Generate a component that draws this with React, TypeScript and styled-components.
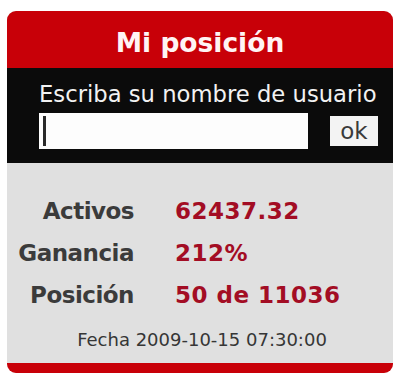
import React from "react";
import styled, { createGlobalStyle } from "styled-components";

const Global = createGlobalStyle`
  html, body { margin: 0; padding: 0; background: #ffffff; }
  body { font-family: "DejaVu Sans", Verdana, sans-serif; }
`;

const Panel = styled.div`
  margin: 11px 0 0 7px;
  width: 386px;
  border-radius: 9px;
  overflow: hidden;
  background: #e0e0e0;
`;

const Header = styled.div`
  height: 57px;
  background: #c80008;
  display: flex;
  align-items: center;
  justify-content: center;
  padding-top: 7px;
  box-sizing: border-box;
`;

const Title = styled.h1`
  margin: 0;
  font-family: "DejaVu Sans", sans-serif;
  font-weight: bold;
  font-size: 26.5px;
  color: #fff4f4;
  line-height: 1;
`;

const LoginBand = styled.div`
  height: 95px;
  background: #0b0b0b;
  padding: 13px 0 0 32px;
  box-sizing: border-box;
  display: flex;
  flex-direction: column;
`;

const Prompt = styled.div`
  font-family: "DejaVu Sans", sans-serif;
  font-size: 22.7px;
  color: #f2f2f2;
  line-height: 27px;
  white-space: nowrap;
`;

const FormRow = styled.div`
  display: flex;
  align-items: center;
  margin-top: 5px;
  gap: 22px;
`;

const Field = styled.div`
  position: relative;
  width: 269px;
  height: 36px;
  background: #fdfdfd;
  &::before {
    content: "";
    position: absolute;
    left: 4px;
    top: 3px;
    bottom: 3px;
    width: 3px;
    background: #2a2a2a;
  }
`;

const Input = styled.input`
  width: 100%;
  height: 100%;
  border: none;
  outline: none;
  background: transparent;
  box-sizing: border-box;
  padding: 0 10px;
  font-family: "DejaVu Sans", sans-serif;
  font-size: 18px;
`;

const OkButton = styled.button`
  width: 48px;
  height: 30px;
  border: none;
  background: #f3f3f3;
  color: #3a3a3a;
  font-family: "DejaVu Sans", sans-serif;
  font-size: 23px;
  line-height: 30px;
  padding: 0;
  cursor: pointer;
`;

const Stats = styled.div`
  height: 200px;
  padding-top: 34px;
  box-sizing: border-box;
  display: flex;
  flex-direction: column;
`;

const StatGrid = styled.div`
  display: grid;
  grid-template-columns: 127px 1fr;
  column-gap: 41px;
  row-gap: 14px;
`;

const Label = styled.div`
  text-align: right;
  font-family: "DejaVu Sans", sans-serif;
  font-weight: bold;
  font-size: 23px;
  letter-spacing: -0.5px;
  line-height: 28px;
  color: #3b3b3b;
`;

const Value = styled.div`
  font-family: "DejaVu Sans", sans-serif;
  font-weight: bold;
  font-size: 23px;
  letter-spacing: 0.5px;
  line-height: 28px;
  color: #a30d24;
`;

const DateLine = styled.div`
  margin-top: 20px;
  text-align: center;
  font-family: "DejaVu Sans", sans-serif;
  font-size: 18px;
  color: #363636;
  padding-left: 4px;
`;

const Footer = styled.div`
  height: 10px;
  background: #c80008;
`;

const stats = [
  { label: "Activos", value: "62437.32" },
  { label: "Ganancia", value: "212%" },
  { label: "Posición", value: "50 de 11036" },
];

export default function App() {
  return (
    <>
      <Global />
      <Panel>
        <Header>
          <Title>Mi posición</Title>
        </Header>
        <LoginBand>
          <Prompt>Escriba su nombre de usuario</Prompt>
          <FormRow>
            <Field>
              <Input type="text" aria-label="usuario" />
            </Field>
            <OkButton>ok</OkButton>
          </FormRow>
        </LoginBand>
        <Stats>
          <StatGrid>
            {stats.map((s) => (
              <React.Fragment key={s.label}>
                <Label>{s.label}</Label>
                <Value>{s.value}</Value>
              </React.Fragment>
            ))}
          </StatGrid>
          <DateLine>Fecha 2009-10-15 07:30:00</DateLine>
        </Stats>
        <Footer />
      </Panel>
    </>
  );
}
